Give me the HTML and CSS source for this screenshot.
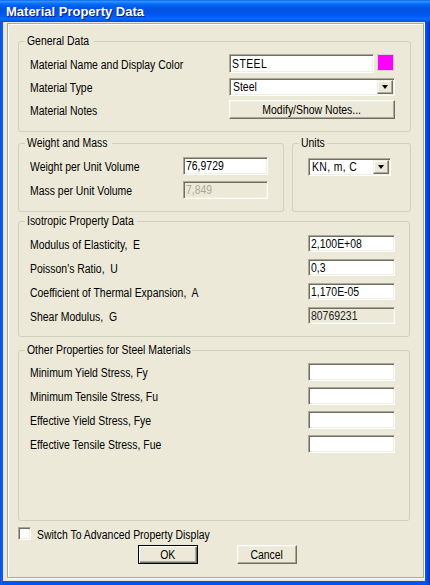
FILE: index.html
```html
<!DOCTYPE html>
<html>
<head>
<meta charset="utf-8">
<title>Material Property Data</title>
<link rel="stylesheet" href="styles.css">
</head>
<body>
<div class="window">
  <div class="titlebar"><span class="title">Material Property Data</span></div>
  <div class="frame">
    <div class="client">
      <div class="panel">
        <fieldset class="group g-general">
          <legend class="lg-general"><span class="t">General Data</span></legend>
          <div class="grid grid-general">
            <span class="lbl"><span class="t">Material Name and Display Color</span></span>
            <div class="name-ctl"><div class="edit name-edit"><span class="t">STEEL</span></div><div class="swatch"></div></div>
            <span class="lbl"><span class="t">Material Type</span></span>
            <div class="combo"><span class="combo-text"><span class="t">Steel</span></span><span class="drop"><i class="tri"></i></span></div>
            <span class="lbl"><span class="t">Material Notes</span></span>
            <div class="btn notes-btn"><span class="t c">Modify/Show Notes...</span></div>
          </div>
        </fieldset>

        <div class="pair">
          <fieldset class="group g-weight">
            <legend class="lg-weight"><span class="t">Weight and Mass</span></legend>
            <div class="grid grid-weight">
              <span class="lbl"><span class="t">Weight per Unit Volume</span></span>
              <div class="edit"><span class="t">76,9729</span></div>
              <span class="lbl"><span class="t">Mass per Unit Volume</span></span>
              <div class="edit disabled"><span class="t">7,849</span></div>
            </div>
          </fieldset>
          <fieldset class="group g-units">
            <legend class="lg-units"><span class="t">Units</span></legend>
            <div class="units-body">
              <div class="combo units-combo"><span class="combo-text"><span class="t">KN, m, C</span></span><span class="drop"><i class="tri"></i></span></div>
            </div>
          </fieldset>
        </div>

        <fieldset class="group g-iso">
          <legend class="lg-iso"><span class="t">Isotropic Property Data</span></legend>
          <div class="grid grid-iso">
            <span class="lbl"><span class="t">Modulus of Elasticity,&nbsp; E</span></span>
            <div class="edit"><span class="t">2,100E+08</span></div>
            <span class="lbl"><span class="t">Poisson's Ratio,&nbsp; U</span></span>
            <div class="edit"><span class="t">0,3</span></div>
            <span class="lbl"><span class="t">Coefficient of Thermal Expansion,&nbsp; A</span></span>
            <div class="edit"><span class="t">1,170E-05</span></div>
            <span class="lbl"><span class="t">Shear Modulus,&nbsp; G</span></span>
            <div class="edit readonly"><span class="t">80769231</span></div>
          </div>
        </fieldset>

        <fieldset class="group g-other">
          <legend class="lg-other"><span class="t">Other Properties for Steel Materials</span></legend>
          <div class="grid grid-other">
            <span class="lbl"><span class="t">Minimum Yield Stress, Fy</span></span>
            <div class="edit"></div>
            <span class="lbl"><span class="t">Minimum Tensile Stress, Fu</span></span>
            <div class="edit"></div>
            <span class="lbl"><span class="t">Effective Yield Stress, Fye</span></span>
            <div class="edit"></div>
            <span class="lbl"><span class="t">Effective Tensile Stress, Fue</span></span>
            <div class="edit"></div>
          </div>
        </fieldset>

        <div class="check-row"><span class="checkbox"></span><span class="check-lbl"><span class="t">Switch To Advanced Property Display</span></span></div>

        <div class="buttons">
          <div class="btn default ok-btn"><span class="t c">OK</span></div>
          <div class="btn cancel-btn"><span class="t c">Cancel</span></div>
        </div>
      </div>
    </div>
  </div>
</div>
</body>
</html>
```

FILE: styles.css
```css
* { box-sizing: border-box; }
html, body { margin: 0; padding: 0; }
body {
  width: 430px;
  height: 585px;
  overflow: hidden;
  font-family: "Liberation Sans", Arial, sans-serif;
  font-size: 12px;
  color: #000;
  background: #0055ea;
}
.t {
  display: inline-block;
  transform: scaleX(0.87);
  transform-origin: left center;
  white-space: nowrap;
}
.t.c { transform-origin: center center; }
.window {
  width: 430px;
  height: 585px;
  display: flex;
  flex-direction: column;
}
.titlebar {
  height: 22px;
  flex: none;
  display: flex;
  align-items: center;
  padding-left: 6px;
  background: linear-gradient(to bottom, #0058ee 0%, #3593ff 5%, #288eff 9%, #127dff 13%, #036ffc 18%, #0262ee 25%, #0057e5 35%, #0054e3 45%, #0055eb 60%, #005bf5 72%, #026afe 84%, #0062ef 92%, #0052d6 100%);
}
.title {
  font-family: "Liberation Sans", Arial, sans-serif;
  font-weight: bold;
  font-size: 13px;
  color: #fff;
  text-shadow: 1px 1px 0 #0a1883;
}
.frame {
  flex: 1;
  display: flex;
  padding: 0 5px 4px 3px;
  background: linear-gradient(to right, #0831d9 0, #166aee 1px, #0055ea 3px, #0055ea 426px, #0731c8 430px);
}
.client {
  flex: 1;
  display: flex;
  background: #ece9d8;
  padding: 1px 1px 3px 4px;
}
.panel {
  flex: 1;
  display: flex;
  flex-direction: column;
  align-items: flex-start;
  border: 1px solid #aca899;
  box-shadow: inset 1px 1px 0 #fff, 1px 1px 0 #fff;
  padding: 10px 0 0 10px;
}

/* group boxes */
.group {
  margin: 0;
  padding: 0;
  border: 1px solid #d0d0bf;
  border-radius: 3px;
  min-width: 0;
}
.group legend {
  margin-left: 6px;
  padding: 0 2px;
  line-height: 14px;
  height: 14px;
  white-space: nowrap;
  overflow: visible;
}
.lg-general { width: 69px; }
.lg-weight { width: 87px; }
.lg-units { width: 28px; }
.lg-iso { width: 112px; }
.lg-other { width: 167px; }
.g-general { width: 393px; }
.pair { display: flex; gap: 8px; margin-top: 4px; }
.g-weight { width: 266px; }
.g-units { width: 119px; }
.g-iso { width: 392px; margin-top: 2px; }
.g-other { width: 392px; margin-top: 6px; }

.lbl {
  line-height: 14px;
  white-space: nowrap;
  position: relative;
  top: 1px;
}
.grid {
  display: grid;
  align-items: center;
  padding-left: 11px;
}
.grid-general {
  grid-template-columns: 199px 166px;
  grid-auto-rows: 19px;
  row-gap: 4px;
  padding-top: 6px;
  padding-bottom: 12px;
}
.grid-weight {
  grid-template-columns: 153px 85px;
  grid-auto-rows: 18px;
  row-gap: 6px;
  padding-top: 7px;
  padding-bottom: 12px;
}
.units-body {
  padding: 8px 0 0 15px;
}
.grid-iso {
  grid-template-columns: 278px 87px;
  grid-auto-rows: 17px;
  row-gap: 7px;
  padding-top: 7px;
  padding-bottom: 12px;
}
.grid-other {
  grid-template-columns: 278px 87px;
  grid-auto-rows: 18px;
  row-gap: 6px;
  padding-top: 6px;
  padding-bottom: 67px;
}

/* controls */
.edit {
  height: 100%;
  background: #fff;
  border: 1px solid;
  border-color: #aca899 #fff #fff #aca899;
  box-shadow: inset 1px 1px 0 #716f64, inset -1px -1px 0 #f1efe2;
  padding: 0 2px;
  display: flex;
  align-items: center;
  line-height: 14px;
  white-space: nowrap;
  overflow: hidden;
}
.edit.disabled { background: #ece9d8; color: #aca899; }
.edit.readonly { background: #ece9d8; color: #222; }
.name-ctl {
  display: flex;
  gap: 3px;
  align-items: flex-start;
  height: 19px;
}
.name-edit { width: 145px; height: 19px; }
.name-edit .t { letter-spacing: 0.5px; }
.swatch {
  width: 17px;
  height: 17px;
  background: #ff00ff;
  border: 1px solid #e0c8e0;
}
.combo {
  height: 18px;
  background: #fff;
  border: 1px solid;
  border-color: #aca899 #fff #fff #aca899;
  box-shadow: inset 1px 1px 0 #716f64, inset -1px -1px 0 #f1efe2;
  display: flex;
  align-items: center;
  padding: 1px 1px 1px 3px;
}
.combo-text { flex: 1; line-height: 14px; white-space: nowrap; }
.drop {
  width: 16px;
  height: 100%;
  background: #ece9d8;
  border: 1px solid;
  border-color: #f1efe2 #716f64 #716f64 #f1efe2;
  box-shadow: inset -1px -1px 0 #aca899, inset 1px 1px 0 #fff;
  display: flex;
  align-items: center;
  justify-content: center;
}
.tri {
  width: 0;
  height: 0;
  border-left: 3.5px solid transparent;
  border-right: 3.5px solid transparent;
  border-top: 4px solid #000;
}
.units-combo { width: 83px; }
.units-combo .t { letter-spacing: 0.4px; }

.btn {
  background: #ece9d8;
  border: 1px solid;
  border-color: #fff #716f64 #716f64 #fff;
  box-shadow: inset -1px -1px 0 #aca899, inset 1px 1px 0 #f1efe2;
  display: flex;
  align-items: center;
  justify-content: center;
  line-height: 14px;
  white-space: nowrap;
}
.notes-btn { height: 19px; }
.btn.default {
  border-color: #000;
  box-shadow: inset 1px 1px 0 #fff, inset -1px -1px 0 #716f64, inset -2px -2px 0 #aca899;
}

.check-row {
  display: flex;
  align-items: center;
  gap: 6px;
  margin-top: 6px;
  height: 13px;
}
.checkbox {
  width: 13px;
  height: 13px;
  background: #fff;
  border: 1px solid;
  border-color: #aca899 #fff #fff #aca899;
  box-shadow: inset 1px 1px 0 #716f64, inset -1px -1px 0 #f1efe2;
}
.check-lbl { line-height: 14px; position: relative; top: 1px; }

.buttons {
  display: flex;
  gap: 39px;
  margin-top: 5px;
  margin-left: 120px;
}
.ok-btn, .cancel-btn { width: 60px; height: 19px; }
```
